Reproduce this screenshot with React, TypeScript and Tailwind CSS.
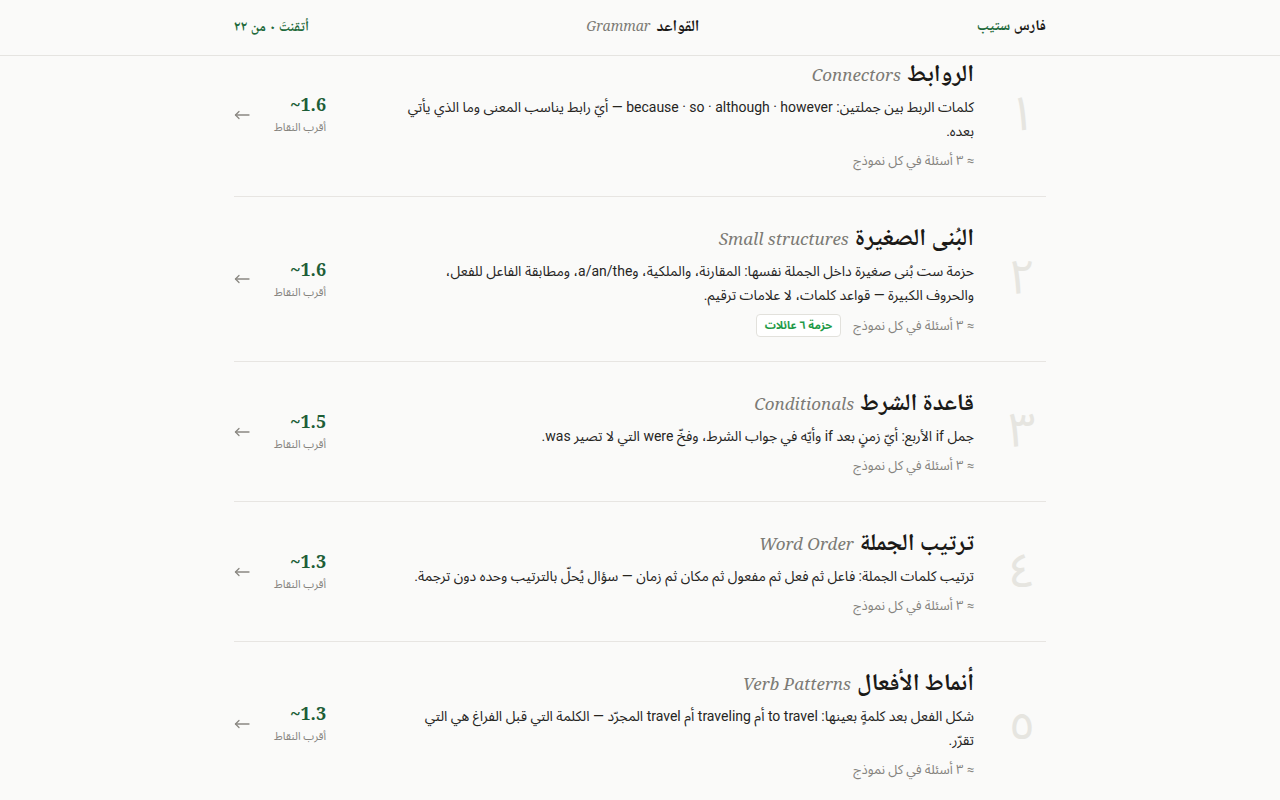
import React from "react";

type Topic = {
  num: string;
  title: string;
  en: string;
  desc: string;
  score: string;
  badge?: string;
};

const topics: Topic[] = [
  {
    num: "١",
    title: "الروابط",
    en: "Connectors",
    desc: "كلمات الربط بين جملتين: because · so · although · however — أيّ رابط يناسب المعنى وما الذي يأتي بعده.",
    score: "~1.6",
  },
  {
    num: "٢",
    title: "البُنى الصغيرة",
    en: "Small structures",
    desc: "حزمة ست بُنى صغيرة داخل الجملة نفسها: المقارنة، والملكية، وa/an/the، ومطابقة الفاعل للفعل، والحروف الكبيرة — قواعد كلمات، لا علامات ترقيم.",
    score: "~1.6",
    badge: "حزمة ٦ عائلات",
  },
  {
    num: "٣",
    title: "قاعدة الشرط",
    en: "Conditionals",
    desc: "جمل if الأربع: أيّ زمنٍ بعد if وأيّه في جواب الشرط، وفخّ were التي لا تصير was.",
    score: "~1.5",
  },
  {
    num: "٤",
    title: "ترتيب الجملة",
    en: "Word Order",
    desc: "ترتيب كلمات الجملة: فاعل ثم فعل ثم مفعول ثم مكان ثم زمان — سؤال يُحلّ بالترتيب وحده دون ترجمة.",
    score: "~1.3",
  },
  {
    num: "٥",
    title: "أنماط الأفعال",
    en: "Verb Patterns",
    desc: "شكل الفعل بعد كلمةٍ بعينها: to travel أم traveling أم travel المجرّد — الكلمة التي قبل الفراغ هي التي تقرّر.",
    score: "~1.3",
  },
];

const sans = "font-['Roboto','Noto_Sans_Arabic',sans-serif]";
const display = "font-['Noto_Naskh_Arabic','Noto_Sans_Arabic',sans-serif]";
const serif = "font-['Noto_Serif','Liberation_Serif',serif]";

function ArrowLeft() {
  return (
    <svg width="16" height="10" viewBox="0 0 16 10" fill="none" stroke="currentColor" strokeWidth="1.3" strokeLinecap="round" strokeLinejoin="round">
      <path d="M15 5H1.5" />
      <path d="M5 1.5L1.5 5L5 8.5" />
    </svg>
  );
}

function TopicRow({ t }: { t: Topic }) {
  return (
    <div className="flex items-center gap-6 py-6 border-b border-[#e7e5e2]">
      {/* رقم */}
      <div className="w-12 shrink-0 text-center text-5xl leading-none text-[#e6e5e0] font-['Noto_Sans_Arabic',sans-serif]">
        {t.num}
      </div>

      {/* المحتوى */}
      <div className="flex-1 min-w-0">
        <div className="flex items-baseline gap-1.5 h-8 pt-[2px]">
          <h2 className={`text-2xl font-extrabold text-[#1a1917] leading-[34px] ${display}`}>{t.title}</h2>
          <span dir="ltr" className={`text-[17px] italic text-[#7c7a75] ${serif}`}>{t.en}</span>
        </div>
        <p className={`mt-[6px] max-w-xl text-sm leading-6 text-[#26251f] ${sans}`}>{t.desc}</p>
        <div className={`mt-[7px] min-h-[22px] flex items-center gap-3 text-[13px] text-[#85837e] ${sans}`}>
          <span>≈ ٣ أسئلة في كل نموذج</span>
          {t.badge && (
            <span className="px-2 py-[3px] leading-[15px] rounded border border-[#e2e1dc] bg-white text-[11px] font-bold text-[#1e9a47]">
              {t.badge}
            </span>
          )}
        </div>
      </div>

      {/* النقاط */}
      <div className="shrink-0 text-start">
        <div dir="ltr" className={`text-right text-lg font-bold leading-6 text-[#1d5e37] ${serif}`}>{t.score}</div>
        <div className={`mt-1 text-[11px] text-[#85837e] ${sans}`}>أقرب النقاط</div>
      </div>

      <div className="w-4 shrink-0 flex items-center text-[#8a8882]">
        <ArrowLeft />
      </div>
    </div>
  );
}

export default function App() {
  return (
    <div dir="rtl" className={`min-h-screen bg-[#fafaf9] ${sans}`}>
      <header className="fixed inset-x-0 top-0 z-10 h-14 bg-[#fafaf9] border-b border-[#e5e4e1]">
        <div className="max-w-[812px] mx-auto h-full flex items-center justify-between">
          <div className={`text-[15px] font-extrabold text-[#1a1917] ${display}`}>
            فارس <span className="text-[#1f6a3c]">ستيب</span>
          </div>
          <div className="flex items-baseline gap-1.5">
            <span className={`text-base font-extrabold text-[#1a1917] ${display}`}>القواعد</span>
            <span dir="ltr" className={`text-sm italic text-[#7c7a75] ${serif}`}>Grammar</span>
          </div>
          <div className={`text-sm font-bold text-[#1f6a3c] ${display}`}>أتقنتَ ٠ من ٢٢</div>
        </div>
      </header>

      <main className="max-w-[812px] mx-auto pt-[33px]">
        {topics.map(t => (
          <TopicRow key={t.num} t={t} />
        ))}
      </main>
    </div>
  );
}
